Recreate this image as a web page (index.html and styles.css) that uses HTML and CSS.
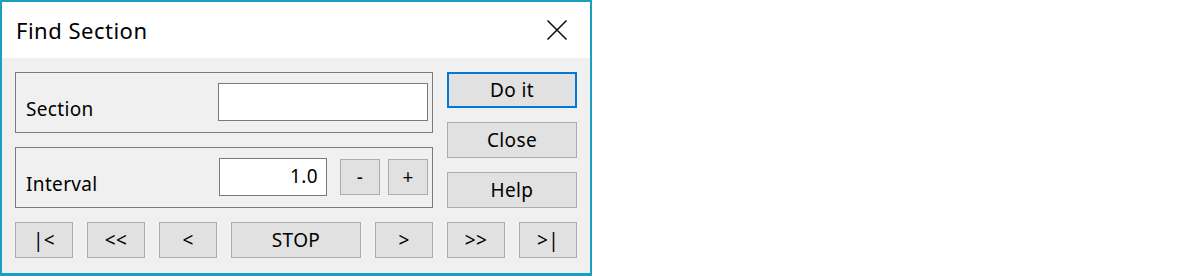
FILE: index.html
```html
<!DOCTYPE html>
<html>
<head>
<meta charset="utf-8">
<link rel="stylesheet" href="styles.css">
</head>
<body>
<div class="dialog">
  <div class="titlebar">
    <span class="title">Find Section</span>
    <span class="close-x">
      <svg width="22" height="22" viewBox="0 0 22 22"><path d="M1.5 1.5 L20.5 20.5 M20.5 1.5 L1.5 20.5" stroke="#111" stroke-width="1.6" fill="none"/></svg>
    </span>
  </div>
  <div class="body">
    <div class="main">
      <div class="left">
        <div class="group">
          <span class="label">Section</span>
          <div class="field field-wide"></div>
        </div>
        <div class="group">
          <span class="label">Interval</span>
          <div class="field field-num">1.0</div>
          <div class="btn btn-sm btn-minus">-</div>
          <div class="btn btn-sm btn-plus">+</div>
        </div>
      </div>
      <div class="right">
        <div class="btn btn-wide btn-default">Do it</div>
        <div class="btn btn-wide">Close</div>
        <div class="btn btn-wide">Help</div>
      </div>
    </div>
    <div class="nav">
      <div class="btn btn-nav">|&lt;</div>
      <div class="btn btn-nav">&lt;&lt;</div>
      <div class="btn btn-nav">&lt;</div>
      <div class="btn btn-stop">STOP</div>
      <div class="btn btn-nav">&gt;</div>
      <div class="btn btn-nav">&gt;&gt;</div>
      <div class="btn btn-nav">&gt;|</div>
    </div>
  </div>
</div>
</body>
</html>
```
FILE: styles.css
```css
* { box-sizing: border-box; }
html, body { margin: 0; padding: 0; background: #ffffff; }
body { font-family: "Noto Sans", "Open Sans", sans-serif; color: #000; }

.dialog {
  width: 592px;
  height: 276px;
  border: 2px solid #1a9fc2;
  border-bottom-width: 3px;
  display: flex;
  flex-direction: column;
  background: #f0f0f0;
}

.titlebar {
  height: 56px;
  background: #ffffff;
  display: flex;
  align-items: center;
  justify-content: space-between;
  padding: 0 22px 0 14px;
}
.title {
  font-size: 22px;
  line-height: 26px;
  letter-spacing: 0.5px;
  margin-top: -1px;
}
.close-x {
  width: 22px;
  height: 22px;
  display: flex;
  margin-top: -1px;
}

.body {
  flex: 1;
  padding: 14px 13px 0 13px;
  display: flex;
  flex-direction: column;
  gap: 14px;
}

.main {
  display: flex;
  gap: 14px;
}
.left {
  width: 418px;
  display: flex;
  flex-direction: column;
  gap: 14px;
}
.right {
  width: 130px;
  display: flex;
  flex-direction: column;
  gap: 14px;
}

.group {
  height: 61px;
  border: 1px solid #7a7a7a;
  display: flex;
  align-items: flex-start;
  padding: 10px 4px 0 10px;
}
.label {
  flex: 1;
  font-size: 19px;
  letter-spacing: 0.35px;
  line-height: 24px;
  margin-top: 14px;
}
.field {
  height: 38px;
  background: #ffffff;
  border: 1px solid #7a7a7a;
  font-size: 19px;
  letter-spacing: 0.35px;
  line-height: 34px;
}
.field-wide { width: 210px; }
.field-num {
  width: 108px;
  text-align: right;
  padding-right: 8px;
}

.btn {
  background: #e1e1e1;
  border: 1px solid #adadad;
  height: 36px;
  display: flex;
  align-items: center;
  justify-content: center;
  font-size: 19px;
  letter-spacing: 0.35px;
  line-height: 24px;
}
.btn-sm { width: 40px; margin-top: 1px; }
.btn-minus { margin-left: 13px; }
.btn-plus { margin-left: 8px; }
.btn-wide { width: 130px; }
.btn-default { border: 2px solid #0078d7; }

.nav {
  display: flex;
  gap: 14px;
}
.btn-nav { width: 58px; }
.btn-stop { width: 130px; }
```
